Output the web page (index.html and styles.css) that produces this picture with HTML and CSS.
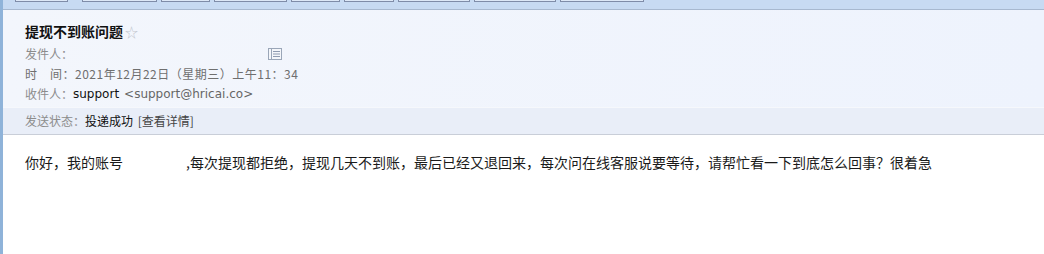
FILE: index.html
```html
<!DOCTYPE html>
<html lang="zh-CN">
<head>
    <meta charset="UTF-8">
    <title>提现不到账问题</title>
    <link rel="stylesheet" href="styles.css">
</head>
<body>
    <div class="frame">
        <!-- Gornja traka sa dugmićima -->
        <div class="toolbar">
            <span class="tb-btn" style="width: 53px; margin-left: 12px;"></span>
            <span class="tb-btn" style="width: 75px; margin-left: 10px;"></span>
            <span class="tb-btn" style="width: 49px;"></span>
            <span class="tb-btn" style="width: 73px;"></span>
            <span class="tb-btn" style="width: 49px;"></span>
            <span class="tb-btn" style="width: 50px;"></span>
            <span class="tb-btn" style="width: 72px;"></span>
            <span class="tb-btn" style="width: 82px;"></span>
            <span class="tb-btn" style="width: 84px;"></span>
        </div>

        <!-- Zaglavlje poruke -->
        <div class="mail-head">
            <div class="subject">提现不到账问题<span class="star">☆</span></div>
            <div class="meta-row">
                <span class="label">发件人：</span>
                <span class="hidden-sender"></span>
                <svg class="card-icon" width="14" height="12" viewBox="0 0 14 12">
                    <rect x="0.5" y="0.5" width="13" height="11" fill="#f4f6fa" stroke="#9aa6b8"/>
                    <line x1="3.5" y1="1" x2="3.5" y2="11" stroke="#9aa6b8"/>
                    <line x1="5" y1="3.5" x2="12" y2="3.5" stroke="#8f9bb0"/>
                    <line x1="5" y1="6" x2="12" y2="6" stroke="#8f9bb0"/>
                    <line x1="5" y1="8.5" x2="12" y2="8.5" stroke="#8f9bb0"/>
                </svg>
            </div>
            <div class="meta-row date-row">时　间：2021年12月22日（星期三）上午11：34</div>
            <div class="meta-row">
                <span class="label">收件人：</span><span class="to-name">support</span>
                <span class="to-mail">&lt;support@hricai.co&gt;</span>
            </div>
            <div class="status-bar">
                <span class="label">发送状态：</span><span class="status-ok">投递成功</span>
                <span class="status-link">[查看详情]</span>
            </div>
        </div>

        <!-- Tekst poruke -->
        <div class="mail-body">
            你好，我的账号<span class="hidden-account"></span>,每次提现都拒绝，提现几天不到账，最后已经又退回来，每次问在线客服说要等待，请帮忙看一下到底怎么回事？很着急
        </div>
    </div>
</body>
</html>
```

FILE: styles.css
```css
body {
    margin: 0;
    padding: 0;
    background: #ffffff;
    font-family: "Noto Sans CJK SC", sans-serif;
}

.frame {
    min-height: 100vh;
    border-left: 3px solid #8fb3d9;
    box-sizing: border-box;
}

/* Traka */
.toolbar {
    display: flex;
    align-items: flex-start;
    gap: 4px;
    height: 9px;
    background: #c7daf2;
    border-bottom: 1px solid #a7b8cf;
}

.tb-btn {
    display: block;
    box-sizing: border-box;
    height: 2px;
    background: #dde8f7;
    border: 1px solid #7f8ca8;
    border-top: none;
}

/* Zaglavlje */
.mail-head {
    background: linear-gradient(to right, #f3f6fc, #eef3fd);
    padding-top: 11px;
    border-bottom: 1px solid #c9ced8;
}

.subject {
    padding-left: 22px;
    height: 20px;
    line-height: 20px;
    font-size: 14px;
    font-weight: bold;
    color: #111;
}

.star {
    font-weight: normal;
    font-size: 13px;
    color: #c3c7cf;
    margin-left: 2px;
}

.meta-row {
    display: flex;
    align-items: center;
    padding-left: 22px;
    height: 20px;
    line-height: 20px;
    font-size: 12px;
    color: #777;
}

.meta-row:nth-child(2) {
    margin-top: 3px;
}

.label {
    color: #8c8c8c;
}

.hidden-sender {
    width: 195px;
}

.card-icon {
    display: block;
}

.date-row {
    color: #6f6f6f;
    letter-spacing: 0.5px;
}

.to-name {
    font-family: "DejaVu Sans", sans-serif;
    color: #111;
}

.to-mail {
    font-family: "DejaVu Sans", sans-serif;
    color: #666;
    margin-left: 5px;
}

.status-bar {
    margin-top: 3px;
    padding-left: 22px;
    height: 26px;
    line-height: 26px;
    font-size: 12px;
    background: #e9eef8;
    border-top: 1px solid #f6f8fc;
}

.status-ok {
    color: #111;
}

.status-link {
    color: #444;
    margin-left: 2px;
}

/* Tekst */
.mail-body {
    padding: 17px 0 0 22px;
    line-height: 20px;
    font-size: 14px;
    color: #1a1a1a;
}

.hidden-account {
    display: inline-block;
    width: 63px;
}
```
